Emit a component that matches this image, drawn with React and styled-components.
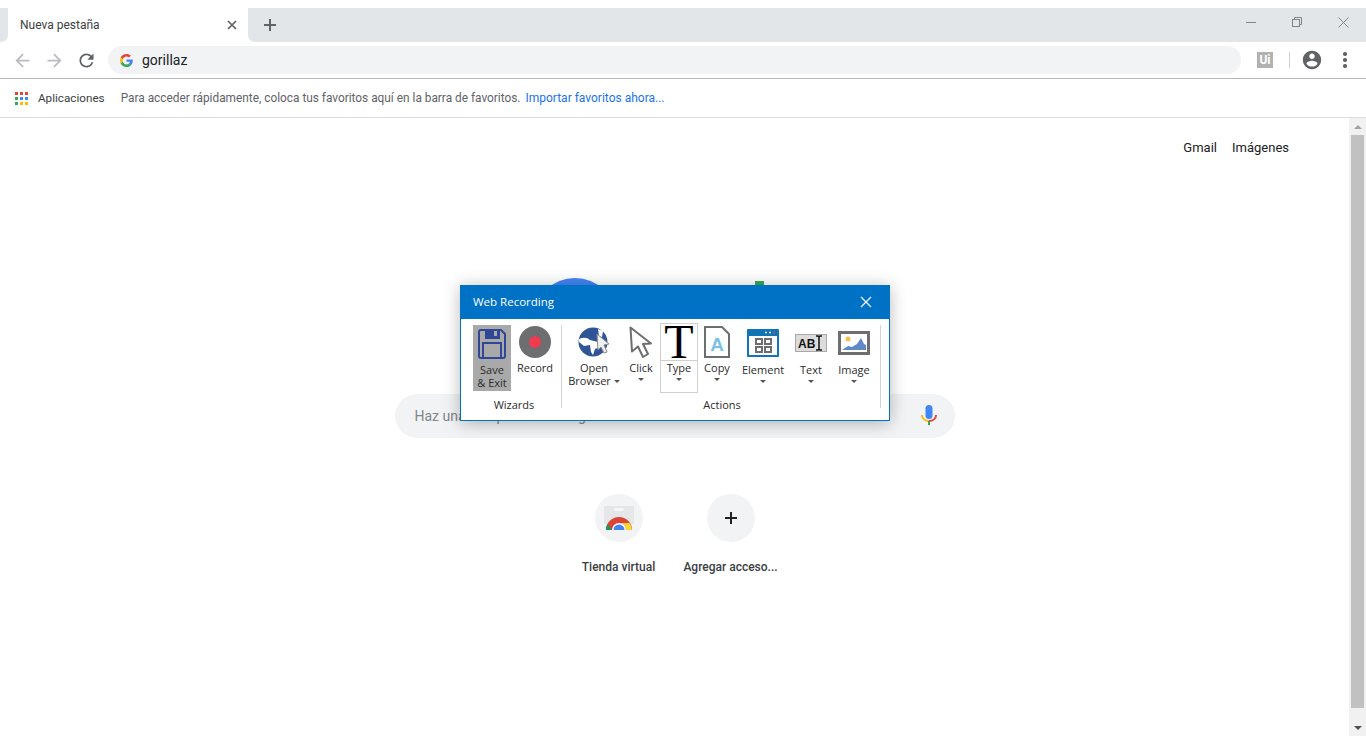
import React from "react";
import styled, { createGlobalStyle } from "styled-components";

const GlobalStyle = createGlobalStyle`
  html, body {
    margin: 0;
    height: 736px;
    overflow: hidden;
    background: #fff;
    font-family: Roboto, "Liberation Sans", sans-serif;
  }
`;

const Page = styled.div`
  position: relative;
  width: 1366px;
  height: 736px;
  display: flex;
  flex-direction: column;
  overflow: hidden;
`;

const TabStrip = styled.div`
  display: flex;
  height: 34px;
  margin-top: 8px;
  flex: none;
`;

const StripEdge = styled.div`
  width: 8px;
  background: #e3e6e9;
  border-bottom-right-radius: 7px;
`;

const Tab = styled.div`
  width: 240px;
  display: flex;
  align-items: center;
  justify-content: space-between;
  padding: 0 11px 0 12px;
  box-sizing: border-box;
  background: #fff;
  border-radius: 8px 8px 0 0;
  font-size: 12px;
  color: #3c4043;
`;

const StripRest = styled.div`
  flex: 1;
  display: flex;
  align-items: center;
  justify-content: space-between;
  padding-left: 15px;
  background: #e3e6e9;
  border-bottom-left-radius: 7px;
`;

const WindowButtons = styled.div`
  display: flex;
  align-self: flex-start;
`;

const WindowButton = styled.div`
  width: 46px;
  height: 28px;
  display: flex;
  align-items: center;
  justify-content: center;
`;

const Toolbar = styled.div`
  height: 36px;
  flex: none;
  display: flex;
  align-items: center;
  border-bottom: 1px solid #b4b6b8;
`;

const NavButton = styled.div`
  width: 32px;
  display: flex;
  justify-content: center;
  &:first-child {
    margin-left: 6px;
  }
`;

const Omnibox = styled.div`
  width: 1133px;
  height: 28px;
  margin-left: 6px;
  padding-left: 12px;
  box-sizing: border-box;
  display: flex;
  align-items: center;
  gap: 9px;
  background: #f1f3f4;
  border-radius: 14px;
  font-size: 14px;
  color: #202124;
`;

const UiBadge = styled.div`
  width: 16px;
  height: 16px;
  margin-left: 16px;
  display: flex;
  align-items: center;
  justify-content: center;
  background: #b1b1b1;
  color: #fff;
  font-size: 12px;
  font-weight: 700;
`;

const ToolbarDivider = styled.div`
  width: 1px;
  height: 16px;
  margin: 0 11px 0 16px;
  background: #d0d2d4;
`;

const Dots = styled.div`
  margin-left: 20px;
  display: flex;
  flex-direction: column;
  gap: 2.500px;
  i {
    width: 3.500px;
    height: 3.500px;
    border-radius: 50%;
    background: #5f6368;
  }
`;

const BookmarksBar = styled.div`
  height: 38px;
  flex: none;
  display: flex;
  align-items: center;
  padding-left: 15px;
  border-bottom: 1px solid #dadce0;
  font-size: 11.850px;
  color: #5f6368;
`;

const AppsLabel = styled.span`
  margin: 0 16px 0 10px;
  font-size: 11.700px;
  color: #3c4043;
`;

const BookmarkLink = styled.span`
  margin-left: 5px;
  font-size: 12px;
  color: #1a73e8;
`;

const Viewport = styled.div`
  flex: 1;
  display: flex;
  min-height: 0;
`;

const Main = styled.main`
  flex: 1;
  display: flex;
  flex-direction: column;
  align-items: center;
`;

const TopLinks = styled.div`
  align-self: stretch;
  height: 58px;
  display: flex;
  align-items: center;
  justify-content: flex-end;
  gap: 15px;
  padding-right: 60px;
  font-size: 13px;
  color: #202124;
`;

const Logo = styled.svg`
  display: block;
  margin-top: 102px;
`;

const SearchBox = styled.div`
  width: 560px;
  height: 44px;
  margin-top: 24px;
  padding: 0 18px 0 20px;
  box-sizing: border-box;
  display: flex;
  align-items: center;
  justify-content: space-between;
  background: #f1f3f4;
  border-radius: 22px;
  font-size: 14px;
  color: #80868b;
`;

const Shortcuts = styled.div`
  display: flex;
  margin-top: 56px;
`;

const Shortcut = styled.div`
  width: 112px;
  display: flex;
  flex-direction: column;
  align-items: center;
  gap: 15px;
`;

const ShortcutCircle = styled.div`
  width: 48px;
  height: 48px;
  display: flex;
  align-items: center;
  justify-content: center;
  background: #f1f3f4;
  border-radius: 50%;
`;

const ShortcutLabel = styled.div`
  font-size: 12px;
  line-height: 20px;
  font-weight: 500;
  white-space: nowrap;
  color: #3c4043;
`;

const Scrollbar = styled.div`
  width: 17px;
  flex: none;
  display: flex;
  flex-direction: column;
  align-items: center;
  background: #f1f1f1;
`;

const ScrollCap = styled.div`
  height: 17px;
  flex: none;
  display: flex;
  align-items: center;
  justify-content: center;
`;

const ScrollThumb = styled.div`
  width: 13px;
  flex: 1;
  background: #c1c1c1;
  margin-bottom: 11px;
`;

const ArrowGlyph = styled.i`
  width: 0;
  height: 0;
  border-left: 4px solid transparent;
  border-right: 4px solid transparent;
  ${(p) =>
    p.$up
      ? `border-bottom: 4px solid ${p.$color};`
      : `border-top: 4px solid ${p.$color};`}
`;

/* the recorder floats over the new tab page */
const Recorder = styled.section`
  position: absolute;
  left: 460px;
  top: 285px;
  width: 430px;
  height: 136px;
  box-sizing: border-box;
  display: flex;
  flex-direction: column;
  background: #fff;
  border: 1px solid #0072c6;
  box-shadow: 0 2px 16px rgba(0, 0, 0, 0.28);
  font-family: "Open Sans", "Noto Sans", sans-serif;
  color: #2b2b2b;
`;

const RecorderHeader = styled.header`
  height: 33px;
  flex: none;
  box-sizing: border-box;
  display: flex;
  align-items: center;
  justify-content: space-between;
  padding: 0 17px 2px 12px;
  background: #0072c6;
  color: #fff;
  font-size: 11.500px;
`;

const Ribbon = styled.div`
  flex: 1;
  display: flex;
  padding-top: 4px;
`;

const Group = styled.div`
  display: flex;
  flex-direction: column;
  width: ${(p) => p.$w}px;
  margin-left: ${(p) => p.$ml || 0}px;
`;

const GroupButtons = styled.div`
  height: 70px;
  display: flex;
  align-items: flex-start;
`;

const GroupLabel = styled.div`
  margin-top: 5px;
  text-align: center;
  font-size: 11px;
  line-height: 14px;
  color: #2b2b2b;
  padding-right: ${(p) => p.$pr || 0}px;
`;

const Separator = styled.div`
  width: 1px;
  height: 83px;
  margin: 2px 0 0 ${(p) => p.$ml}px;
  background: #d4d4d4;
`;

const RibbonButton = styled.div`
  width: ${(p) => p.$w}px;
  margin-left: ${(p) => p.$ml || 0}px;
  display: flex;
  flex-direction: column;
  align-items: center;
  font-size: 11px;
  line-height: 13px;
  white-space: nowrap;
  text-align: center;
  ${(p) =>
    p.$active &&
    `
    margin-top: 2px;
    height: 66px;
    background: #a9a9a9;
  `}
  ${(p) =>
    p.$boxed &&
    `
    box-sizing: border-box;
    height: 70px;
    border: 1px solid #d0d0d0;
  `}
`;

const ButtonIcon = styled.div`
  height: ${(p) => p.$h}px;
  align-self: stretch;
  flex: none;
  display: flex;
  align-items: center;
  justify-content: center;
  ${(p) => p.$rule && "box-sizing: border-box; border-bottom: 1px solid #d0d0d0;"}
`;

const TypeGlyph = styled.span`
  font-family: "Liberation Serif", serif;
  font-size: 48px;
  line-height: 34px;
  color: #000;
`;

const Caret = styled.i`
  width: 0;
  height: 0;
  margin-top: 4px;
  border-left: 3px solid transparent;
  border-right: 3px solid transparent;
  border-top: 3px solid #555;
  ${(p) => p.$inline && "display: inline-block; margin: 0 0 2px 3px;"}
`;

const GoogleG = ({ size }) => (
  <svg width={size} height={size} viewBox="0 0 48 48">
    <path fill="#EA4335" d="M24 9.5c3.54 0 6.71 1.22 9.21 3.6l6.85-6.85C35.9 2.38 30.47 0 24 0 14.62 0 6.51 5.38 2.56 13.22l7.98 6.19C12.43 13.72 17.74 9.5 24 9.5z" />
    <path fill="#4285F4" d="M46.98 24.55c0-1.57-.15-3.09-.38-4.55H24v9.02h12.94c-.58 2.96-2.26 5.48-4.78 7.18l7.73 6c4.51-4.18 7.09-10.36 7.09-17.65z" />
    <path fill="#FBBC05" d="M10.53 28.59c-.48-1.45-.76-2.99-.76-4.59s.27-3.14.76-4.59l-7.98-6.19C.92 16.46 0 20.12 0 24c0 3.88.92 7.54 2.56 10.78l7.97-6.19z" />
    <path fill="#34A853" d="M24 48c6.48 0 11.93-2.13 15.89-5.81l-7.73-6c-2.15 1.45-4.92 2.3-8.16 2.3-6.26 0-11.57-4.22-13.47-9.91l-7.98 6.19C6.51 42.62 14.62 48 24 48z" />
  </svg>
);

const Arrow = ({ flip }) => (
  <svg width="21" height="21" viewBox="0 0 24 24" style={flip ? { transform: "scaleX(-1)" } : undefined}>
    <path fill="#b9bbbe" d="M20 11H7.83l5.59-5.59L12 4l-8 8 8 8 1.41-1.41L7.83 13H20v-2z" />
  </svg>
);

const AppsIcon = () => {
  const colors = ["#ea4335", "#ea4335", "#ea4335", "#34a853", "#4285f4", "#4285f4", "#34a853", "#fbbc05", "#fbbc05"];
  return (
    <svg width="13" height="13" viewBox="0 0 13 13">
      {colors.map((c, i) => (
        <rect key={i} x={(i % 3) * 5} y={Math.floor(i / 3) * 5} width="3" height="3" fill={c} />
      ))}
    </svg>
  );
};

const Mic = () => (
  <svg width="16" height="22" viewBox="0 0 16 22">
    <rect x="4.5" y="0" width="7" height="14" rx="3.5" fill="#4285f4" />
    <path d="M1 10c0 3.6 3 6 7 6" fill="none" stroke="#fbbc05" strokeWidth="2" />
    <path d="M15 10c0 3.6-3 6-7 6" fill="none" stroke="#ea4335" strokeWidth="2" />
    <rect x="7" y="16" width="2" height="4" fill="#34a853" />
  </svg>
);

const StoreIcon = () => (
  <svg width="30" height="26" viewBox="0 0 30 26">
    <rect x="0" y="1" width="30" height="18" fill="#e6e7e8" />
    <rect x="10" y="3" width="10" height="3" rx="1.5" fill="#f6f6f6" />
    <path d="M2 25a13 13 0 0 1 26 0z" fill="#db4437" />
    <path d="M15 18h10.5A13 13 0 0 1 28 25h-6a7 7 0 0 0-7-7z" fill="#fdd835" />
    <path d="M3.500 19L8 25H2a13 13 0 0 1 1.500-6z" fill="#0f9d58" />
    <path d="M8 25a7 7 0 0 1 14 0z" fill="#fff" />
    <path d="M9.500 25a5.500 5.500 0 0 1 11 0z" fill="#4285f4" />
  </svg>
);

const SaveIcon = () => (
  <svg width="28" height="30" viewBox="0 0 28 30" fill="none" stroke="#2f4796" strokeWidth="2">
    <path d="M3 1h20l4 4v22a2 2 0 0 1-2 2H3a2 2 0 0 1-2-2V3a2 2 0 0 1 2-2z" />
    <path d="M8 1v8h13V1" fill="#2f4796" />
    <rect x="16" y="2" width="3" height="5" fill="#a9a9a9" stroke="none" />
    <path d="M5 29V14h18v15" />
  </svg>
);

const RecordIcon = () => (
  <svg width="32" height="32" viewBox="0 0 32 32">
    <circle cx="16" cy="16" r="16" fill="#6d6e70" />
    <circle cx="16" cy="16" r="6" fill="#ef3b50" />
  </svg>
);

const GlobeIcon = () => (
  <svg width="32" height="30" viewBox="0 0 32 30">
    <circle cx="15" cy="15" r="14.500" fill="#2f5597" />
    <path d="M1 12q7-3 11 1l8 2 2 5-5 2-2 6-2-3-1-7-6 1-5-4z" fill="#fff" />
    <path d="M20 2l5 2-1 6-3-1z" fill="#fff" />
    <path d="M19 7l12 10-5 1 3 7-3 1-3-6-3 3z" fill="#f0f0f0" stroke="#8a8a8a" strokeWidth="1" />
  </svg>
);

const CursorIcon = () => (
  <svg width="24" height="32" viewBox="0 0 24 32">
    <path d="M1.500 1.500L22 17.500l-8 .500 5 10-5 3-5-10.500-6 5z" fill="#fff" stroke="#6d6e70" strokeWidth="2" strokeLinejoin="round" />
  </svg>
);

const CopyIcon = () => (
  <svg width="26" height="32" viewBox="0 0 26 32">
    <path d="M1 1h17l7 7v23H1z" fill="#fff" stroke="#6d6e70" strokeWidth="2" />
    <text x="13" y="25" textAnchor="middle" fontFamily="Liberation Sans" fontWeight="700" fontSize="19" fill="#7cc1ea">A</text>
  </svg>
);

const ElementIcon = () => (
  <svg width="32" height="28" viewBox="0 0 32 28">
    <rect width="32" height="28" rx="1" fill="#0f75b5" />
    <rect x="2" y="7" width="28" height="19" fill="#fff" />
    <circle cx="19" cy="3.500" r="1" fill="#fff" />
    <circle cx="23" cy="3.500" r="1" fill="#fff" />
    <circle cx="27" cy="3.500" r="1" fill="#ef3b50" />
    <g fill="none" stroke="#6d6e70" strokeWidth="2">
      <rect x="9" y="10" width="6" height="5" />
      <rect x="18" y="10" width="6" height="5" />
      <rect x="9" y="18" width="6" height="5" />
      <rect x="18" y="18" width="6" height="5" />
    </g>
  </svg>
);

const TextIcon = () => (
  <svg width="32" height="18" viewBox="0 0 32 18">
    <rect x="0.500" y="0.500" width="31" height="17" fill="#dcdcdc" stroke="#a8a8a8" />
    <text x="3" y="14" fontFamily="Liberation Sans" fontWeight="700" fontSize="12" fill="#111">AB</text>
    <path d="M21 2h2l1 1 1-1h2M24 3v12M21 16h2l1-1 1 1h2" fill="none" stroke="#111" strokeWidth="1.500" />
  </svg>
);

const ImageIcon = () => (
  <svg width="32" height="24" viewBox="0 0 32 24">
    <rect x="1.500" y="1.500" width="29" height="21" fill="#fff" stroke="#6d6e70" strokeWidth="3" />
    <circle cx="10" cy="8" r="2.500" fill="#f2c14e" />
    <path d="M4 19l6-4 4 1 5-3 4-6 3 6 2 1v5z" fill="#5f8ac7" />
  </svg>
);

const App = () => (
  <Page>
    <GlobalStyle />
    <TabStrip>
      <StripEdge />
      <Tab>
        <span>Nueva pestaña</span>
        <svg width="10" height="10" viewBox="0 0 10 10">
          <path d="M1 1l8 8M9 1l-8 8" stroke="#5f6368" strokeWidth="1.700" />
        </svg>
      </Tab>
      <StripRest>
        <svg width="14" height="14" viewBox="0 0 14 14">
          <path d="M7 1v12M1 7h12" stroke="#5f6368" strokeWidth="2" />
        </svg>
        <WindowButtons>
          <WindowButton>
            <svg width="10" height="10" viewBox="0 0 10 10">
              <path d="M0 5.500h10" stroke="#808488" />
            </svg>
          </WindowButton>
          <WindowButton>
            <svg width="10" height="10" viewBox="0 0 10 10" fill="none" stroke="#808488">
              <rect x="0.500" y="2.500" width="7" height="7" />
              <path d="M2.500 2.500v-2h7v7h-2" />
            </svg>
          </WindowButton>
          <WindowButton>
            <svg width="11" height="11" viewBox="0 0 11 11">
              <path d="M0.500 0.500l10 10M10.500 0.500l-10 10" stroke="#808488" />
            </svg>
          </WindowButton>
        </WindowButtons>
      </StripRest>
    </TabStrip>

    <Toolbar>
      <NavButton><Arrow /></NavButton>
      <NavButton><Arrow flip /></NavButton>
      <NavButton>
        <svg width="21" height="21" viewBox="0 0 24 24">
          <path fill="#5f6368" d="M17.65 6.35A7.958 7.958 0 0 0 12 4c-4.42 0-7.99 3.58-7.99 8s3.57 8 7.99 8c3.73 0 6.84-2.55 7.73-6h-2.08A5.99 5.99 0 0 1 12 18c-3.31 0-6-2.69-6-6s2.69-6 6-6c1.66 0 3.14.69 4.22 1.78L13 11h7V4l-2.35 2.35z" />
        </svg>
      </NavButton>
      <Omnibox>
        <GoogleG size={13} />
        <span>gorillaz</span>
      </Omnibox>
      <UiBadge>Ui</UiBadge>
      <ToolbarDivider />
      <svg width="22" height="22" viewBox="0 0 24 24">
        <path fill="#5f6368" d="M12 2C6.48 2 2 6.48 2 12s4.48 10 10 10 10-4.48 10-10S17.52 2 12 2zm0 3c1.66 0 3 1.34 3 3s-1.34 3-3 3-3-1.34-3-3 1.34-3 3-3zm0 14.200c-2.500 0-4.710-1.280-6-3.220.030-1.990 4-3.080 6-3.080 1.990 0 5.970 1.090 6 3.080-1.290 1.940-3.500 3.220-6 3.220z" />
      </svg>
      <Dots><i /><i /><i /></Dots>
    </Toolbar>

    <BookmarksBar>
      <AppsIcon />
      <AppsLabel>Aplicaciones</AppsLabel>
      <span>Para acceder rápidamente, coloca tus favoritos aquí en la barra de favoritos.</span>
      <BookmarkLink>Importar favoritos ahora...</BookmarkLink>
    </BookmarksBar>

    <Viewport>
      <Main>
        <TopLinks>
          <span>Gmail</span>
          <span>Imágenes</span>
        </TopLinks>
        <Logo width="272" height="92" viewBox="0 0 272 92">
          <circle cx="36" cy="41" r="41" fill="#4285f4" />
          <rect x="216" y="3" width="9" height="86" fill="#34a853" />
        </Logo>
        <SearchBox>
          <span>Haz una búsqueda en Google o escribe una URL</span>
          <Mic />
        </SearchBox>
        <Shortcuts>
          <Shortcut>
            <ShortcutCircle><StoreIcon /></ShortcutCircle>
            <ShortcutLabel>Tienda virtual</ShortcutLabel>
          </Shortcut>
          <Shortcut>
            <ShortcutCircle>
              <svg width="12" height="12" viewBox="0 0 12 12">
                <path d="M6 0v12M0 6h12" stroke="#202124" strokeWidth="2" />
              </svg>
            </ShortcutCircle>
            <ShortcutLabel>Agregar acceso...</ShortcutLabel>
          </Shortcut>
        </Shortcuts>
      </Main>
      <Scrollbar>
        <ScrollCap><ArrowGlyph $up $color="#a3a3a3" /></ScrollCap>
        <ScrollThumb />
        <ScrollCap><ArrowGlyph $color="#505050" /></ScrollCap>
      </Scrollbar>
    </Viewport>

    <Recorder>
      <RecorderHeader>
        <span>Web Recording</span>
        <svg width="12" height="12" viewBox="0 0 12 12">
          <path d="M1 1l10 10M11 1l-10 10" stroke="#fff" strokeWidth="1.200" />
        </svg>
      </RecorderHeader>
      <Ribbon>
        <Group $w={88} $ml={12}>
          <GroupButtons>
            <RibbonButton $w={38} $active>
              <ButtonIcon $h={38}><SaveIcon /></ButtonIcon>
              Save<br />&amp; Exit
            </RibbonButton>
            <RibbonButton $w={40} $ml={4}>
              <ButtonIcon $h={38}><RecordIcon /></ButtonIcon>
              Record
            </RibbonButton>
          </GroupButtons>
          <GroupLabel $pr={6}>Wizards</GroupLabel>
        </Group>
        <Separator $ml={0} />
        <Group $w={311} $ml={7}>
          <GroupButtons>
            <RibbonButton $w={50}>
              <ButtonIcon $h={38}><GlobeIcon /></ButtonIcon>
              Open
              <span>Browser<Caret $inline /></span>
            </RibbonButton>
            <RibbonButton $w={34} $ml={5}>
              <ButtonIcon $h={38}><CursorIcon /></ButtonIcon>
              Click
              <Caret />
            </RibbonButton>
            <RibbonButton $w={38} $ml={2} $boxed>
              <ButtonIcon $h={37} $rule><TypeGlyph>T</TypeGlyph></ButtonIcon>
              Type
              <Caret />
            </RibbonButton>
            <RibbonButton $w={34} $ml={2}>
              <ButtonIcon $h={38}><CopyIcon /></ButtonIcon>
              Copy
              <Caret />
            </RibbonButton>
            <RibbonButton $w={44} $ml={7}>
              <ButtonIcon $h={40}><ElementIcon /></ButtonIcon>
              Element
              <Caret />
            </RibbonButton>
            <RibbonButton $w={36} $ml={8}>
              <ButtonIcon $h={40}><TextIcon /></ButtonIcon>
              Text
              <Caret />
            </RibbonButton>
            <RibbonButton $w={40} $ml={5}>
              <ButtonIcon $h={40}><ImageIcon /></ButtonIcon>
              Image
              <Caret />
            </RibbonButton>
          </GroupButtons>
          <GroupLabel $pr={5}>Actions</GroupLabel>
        </Group>
        <Separator $ml={0} />
      </Ribbon>
    </Recorder>
  </Page>
);

export default App;
